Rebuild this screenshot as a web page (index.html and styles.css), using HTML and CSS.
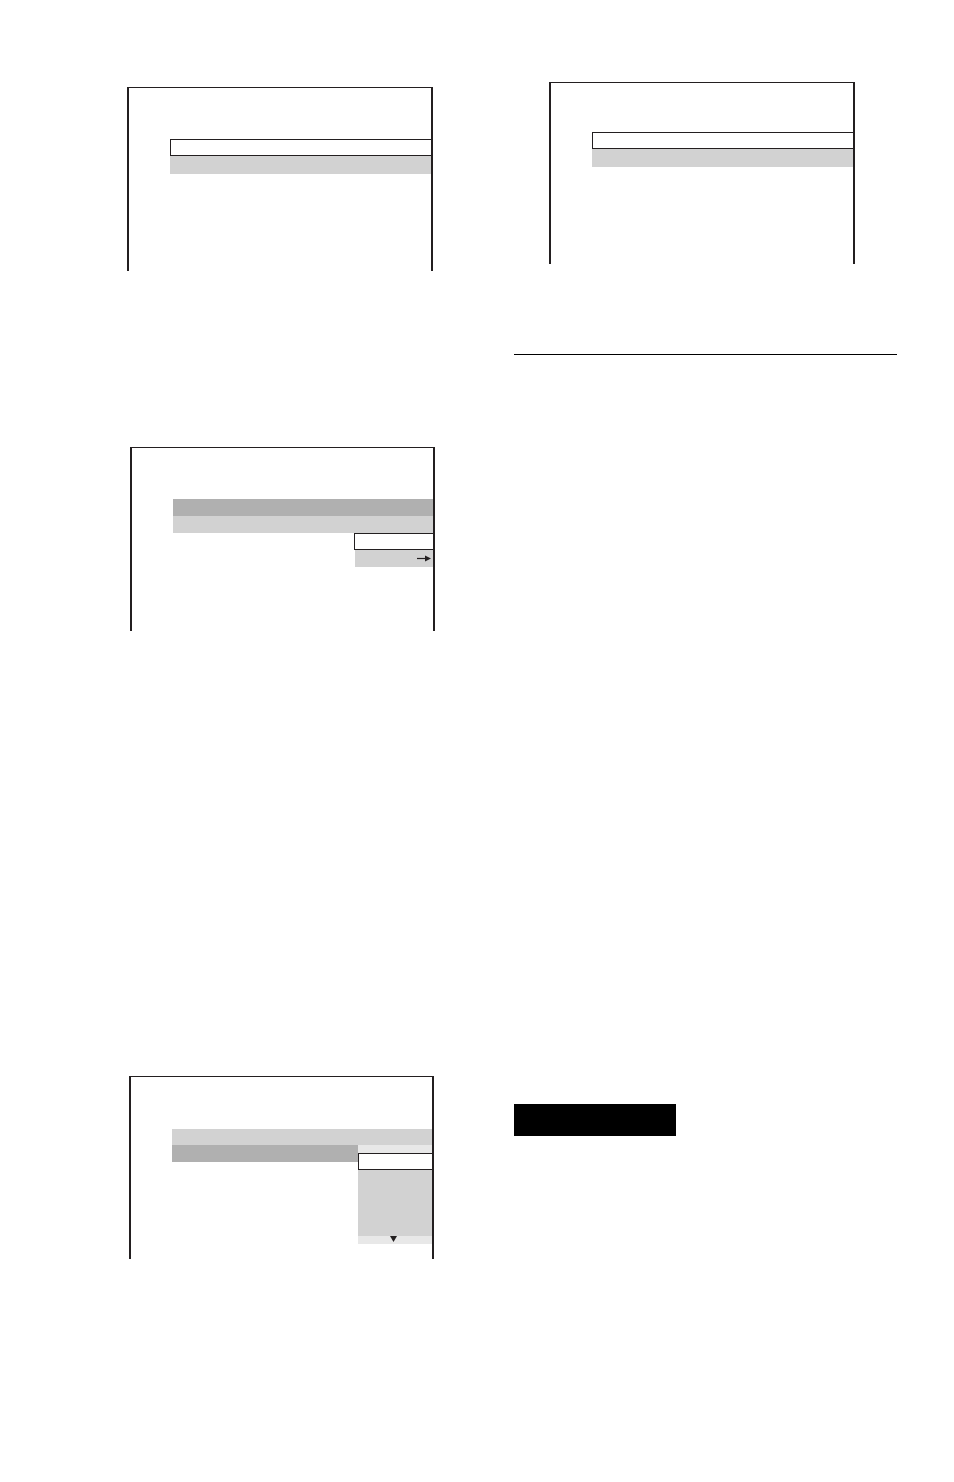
FILE: index.html
```html
<!DOCTYPE html>
<html>
<head>
<meta http-equiv="Content-Type" content="text/html; charset=utf-8" />
<title>Setup screens</title>
<link rel="stylesheet" href="styles.css">
</head>
<body>
<div class="page">
	<div class="col col_left">
		<!-- screen 1 -->
		<div class="screen screen1">
			<div class="menu">
				<div class="row row_sel"></div>
				<div class="row row_light"></div>
			</div>
		</div>

		<!-- screen 3 -->
		<div class="screen screen3">
			<div class="menu">
				<div class="row row_dark"></div>
				<div class="row row_light"></div>
				<div class="sub">
					<div class="row row_sel"></div>
					<div class="row row_light row_arrow">
						<svg width="15" height="7" viewBox="0 0 15 7"><line x1="0" y1="3.5" x2="10" y2="3.5" stroke="#231f20" stroke-width="1.2"/><polygon points="8,0.5 14,3.5 8,6.5" fill="#231f20"/></svg>
					</div>
				</div>
			</div>
		</div>

		<!-- screen 4 -->
		<div class="screen screen4">
			<div class="menu">
				<div class="row row_light"></div>
				<div class="row_split">
					<div class="row row_dark cell_main"></div>
					<div class="list">
						<div class="list_top"></div>
						<div class="row row_sel"></div>
						<div class="list_body"></div>
						<div class="list_foot">
							<svg width="7" height="6" viewBox="0 0 7 6"><polygon points="0,0 7,0 3.5,6" fill="#231f20"/></svg>
						</div>
					</div>
				</div>
			</div>
		</div>
	</div>

	<div class="col col_right">
		<!-- screen 2 -->
		<div class="screen screen2">
			<div class="menu">
				<div class="row row_sel"></div>
				<div class="row row_light"></div>
			</div>
		</div>

		<div class="rule"></div>

		<div class="blackbar"></div>
	</div>
</div>
</body>
</html>
```

FILE: styles.css
```css
html, body { margin: 0; padding: 0; background: #fff; }
body { font-family: "Liberation Sans", Arial, sans-serif; }

.page
{
	display: grid;
	grid-template-columns: 308px 383px;
	column-gap: 79px;
	padding-left: 127px;
	min-height: 1482px;
	box-sizing: border-box;
}
.col { display: flex; flex-direction: column; align-items: flex-start; }

/* screen frames: open at the bottom */
.screen
{
	box-sizing: border-box;
	width: 306px;
	border-left: 2px solid #231f20;
	border-right: 2px solid #231f20;
	border-top: 1px solid #231f20;
}
.menu { margin-left: 41px; display: flex; flex-direction: column; }

.screen1 { margin-top: 87px; height: 184px; padding-top: 51px; }
.screen2 { margin-top: 82px; margin-left: 35px; height: 182px; padding-top: 49px; }
.screen3 { margin-top: 176px; margin-left: 3px; width: 305px; height: 184px; padding-top: 51px; }
.screen4 { margin-top: 445px; margin-left: 2px; width: 305px; height: 183px; padding-top: 52px; }

.row { box-sizing: border-box; height: 17px; }
.row_sel
{
	background: #fff;
	border: 1px solid #231f20;
	border-right: none;
}
.row_light { background: #d2d2d2; height: 17px; }
.row_dark { background: #b0b0b0; }

.screen1 .row_light, .screen2 .row_light { height: 18px; }

.sub { align-self: flex-end; width: 79px; display: flex; flex-direction: column; }
.row_arrow
{
	display: flex;
	align-items: center;
	justify-content: flex-end;
	padding-right: 1px;
	margin-left: 1px;
}

.screen4 .row_light { height: 16px; }
.row_split { display: flex; }
.cell_main { width: 186px; }
.list { flex: 1; display: flex; flex-direction: column; }
.list_top { height: 8px; background: #e8e8e8; }
.list .row_sel { height: 17px; }
.list_body { height: 66px; background: #d2d2d2; }
.list_foot
{
	height: 8px;
	background: #e8e8e8;
	display: flex;
	justify-content: center;
	align-items: flex-start;
	padding-right: 3px;
}

.rule
{
	margin-top: 90px;
	width: 383px;
	height: 1px;
	background: #000;
}
.blackbar
{
	margin-top: 749px;
	width: 162px;
	height: 32px;
	background: #000;
}
```
